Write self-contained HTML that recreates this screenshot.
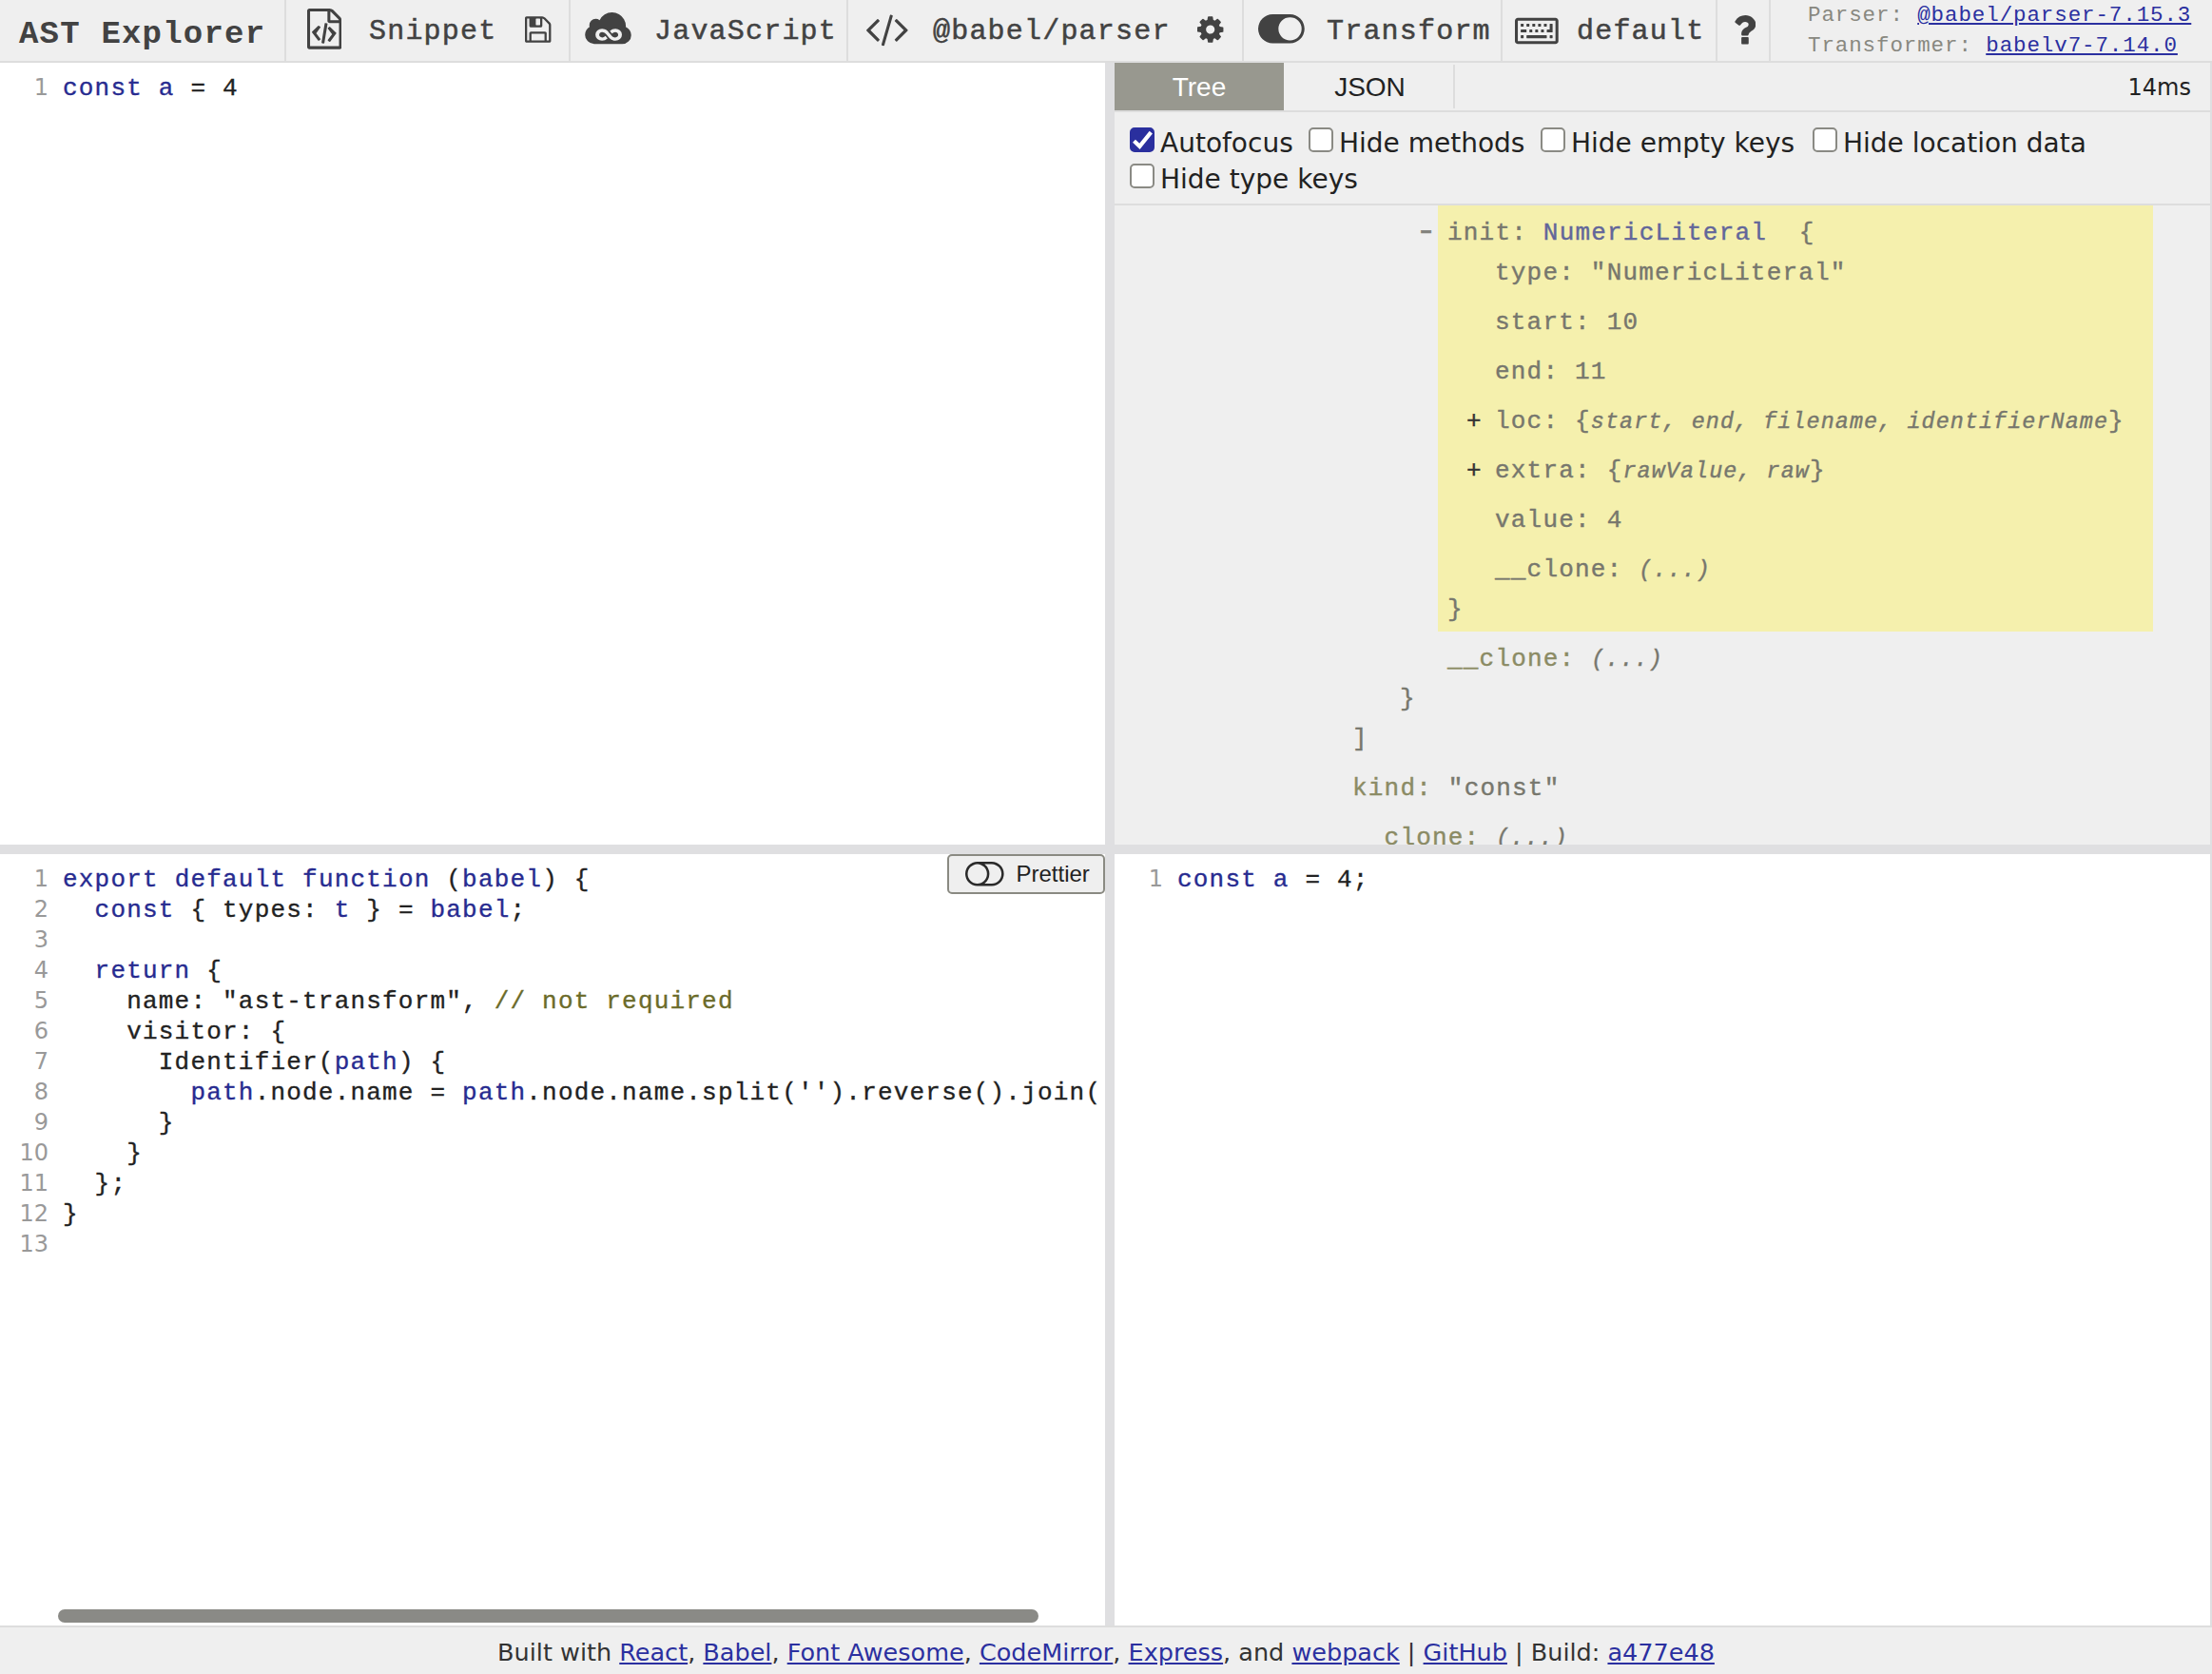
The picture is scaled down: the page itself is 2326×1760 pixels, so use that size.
<!DOCTYPE html>
<html lang="en">
<head>
<meta charset="utf-8">
<title>AST explorer</title>
<style>
html,body{margin:0;padding:0;}
body{width:2326px;height:1760px;overflow:hidden;position:relative;background:#fff;font-family:"DejaVu Sans","Liberation Sans",sans-serif;color:#333;}
*{box-sizing:border-box;}
.mono{font-family:"Liberation Mono",monospace;}
#toolbar{position:absolute;left:0;top:0;width:2326px;height:66px;background:#efefef;border-bottom:2px solid #ddd;font-family:"Liberation Mono",monospace;color:#424242;font-size:30px;letter-spacing:1.2px;line-height:66px;white-space:nowrap;}
#toolbar h1{position:absolute;left:0;top:0;margin:0;padding:0 0 0 20px;font-size:34px;letter-spacing:1.2px;font-weight:bold;line-height:72px;height:64px;}
.sep{position:absolute;top:0;width:2px;height:64px;background:#ddd;}
.tt{position:absolute;top:0;height:64px;line-height:66px;-webkit-text-stroke:0.5px #424242;}
.ic{position:absolute;display:block;fill:#424242;}
#info{position:absolute;left:1901px;top:0;font-size:22.5px;letter-spacing:0.9px;line-height:32px;color:#888880;}
#info a{color:#2b30a0;text-decoration:underline;}
#info div{height:32px;white-space:pre;}

.split{position:absolute;background:#dfdfe1;}
.editor{position:absolute;background:#fff;overflow:hidden;}
.cm{position:absolute;left:0;top:8px;right:0;}
.ln{position:relative;height:32px;line-height:38px;font-family:"Liberation Mono",monospace;font-size:26px;letter-spacing:1.2px;color:#222;white-space:pre;padding-left:66px;-webkit-text-stroke:0.35px;}
.ln i{position:absolute;left:1px;top:2px;width:50px;text-align:right;font-style:normal;font-family:"DejaVu Sans",sans-serif;font-size:24px;letter-spacing:0;color:#999;line-height:32px;-webkit-text-stroke:0;}
.k{color:#272b90;}
.d{color:#272b90;}
.c{color:#6b6b2a;}

#out{position:absolute;left:1172px;top:66px;width:1154px;height:822px;background:#efefef;overflow:hidden;}
#tabs{position:absolute;left:0;top:0;width:1154px;height:52px;border-bottom:2px solid #ddd;font-family:"Liberation Sans",sans-serif;font-size:28px;line-height:52px;color:#222;}
#tabs .tab{position:absolute;top:0;height:50px;text-align:center;}
#tabs .act{background:#98988f;color:#fff;}
#tabs .time{position:absolute;right:22px;top:0;font-size:24px;font-family:"DejaVu Sans",sans-serif;line-height:52px;}
#settings{position:absolute;left:0;top:52px;width:1154px;height:98px;border-bottom:2px solid #ddd;font-size:28px;color:#222;}
#settings .cb{position:absolute;width:26px;height:26px;border:2px solid #8a8a84;border-radius:5px;background:#fff;}
#settings .cb.on{background:#2a2f9e;border-color:#2a2f9e;}
#settings .lb{position:absolute;white-space:nowrap;line-height:34px;}
#tree{position:absolute;left:0;top:150px;width:1154px;bottom:0;font-family:"Liberation Mono",monospace;font-size:26px;letter-spacing:1.2px;line-height:32px;color:#7a7a72;white-space:pre;-webkit-text-stroke:0.4px;}
#tree .hl{position:absolute;background:#f5f0ad;}
#tree .t{position:absolute;height:32px;}
#tree .key{color:#8b8b64;}
#tree .keyh{color:#77776d;}
#tree .tn{color:#62669a;}
#tree .s{color:#77776d;}
#tree em{font-style:italic;font-size:23.4px;letter-spacing:1.08px;}
#tree .tg{color:#333;}

#prettier{position:absolute;left:996px;top:898px;width:166px;height:42px;border:2px solid #8a8a82;border-radius:5px;background:#efefef;font-family:"Liberation Sans",sans-serif;font-size:24px;color:#222;}
#prettier span{position:absolute;left:70.5px;top:0;line-height:38px;}
#hscroll{position:absolute;left:61px;top:1692px;width:1031px;height:14px;border-radius:7px;background:#8a8a86;}
#footer{position:absolute;left:0;top:1709px;width:2326px;height:51px;background:#efefef;border-top:2px solid #ddd;text-align:center;font-size:25.5px;line-height:30px;padding-top:11px;color:#333;white-space:nowrap;}
#footer a{color:#2b30a0;text-decoration:underline;}
</style>
</head>
<body>
<div id="toolbar">
  <h1>AST Explorer</h1>
  <div class="sep" style="left:299px"></div>
  <div class="tt" style="left:388px">Snippet</div>
  <div class="sep" style="left:598px"></div>
  <div class="tt" style="left:688px">JavaScript</div>
  <div class="sep" style="left:890px"></div>
  <div class="tt" style="left:981px">@babel/parser</div>
  <div class="sep" style="left:1306px"></div>
  <div class="tt" style="left:1395px">Transform</div>
  <div class="sep" style="left:1578px"></div>
  <div class="tt" style="left:1658px">default</div>
  <div class="sep" style="left:1804px"></div>
  <div class="sep" style="left:1860px"></div>
  <svg class="ic" viewBox="0 0 1536 1792" style="left:322.6px;top:9.2px;width:36.57px;height:42.67px"><path d="M1468 380q28 28 48 76t20 88v1152q0 40-28 68t-68 28h-1344q-40 0-68-28t-28-68v-1600q0-40 28-68t68-28h896q40 0 88 20t76 48zm-444-244v376h376q-10-29-22-41l-313-313q-12-12-41-22zm384 1528v-1024h-416q-40 0-68-28t-28-68v-416h-768v1536h1280zm-928-896q8-11 21-12.500t24 6.500l51 38q11 8 12.500 21t-6.500 24l-182 243 182 243q8 11 6.500 24t-12.500 21l-51 38q-11 8-24 6.500t-21-12.500l-262-349q-14-19 0-38zm802 301q14 19 0 38l-262 349q-8 11-21 12.500t-24-6.500l-51-38q-11-8-12.500-21t6.500-24l182-243-182-243q-8-11-6.500-24t12.500-21l51-38q11-8 24-6.500t21 12.500zm-620 461q-13-2-20.500-13t-5.500-24l138-831q2-13 13-20.500t24-5.500l63 10q13 2 20.500 13t5.500 24l-138 831q-2 13-13 20.500t-24 5.500z"/></svg>
  <svg class="ic" viewBox="0 0 1536 1792" style="left:552.3px;top:14.5px;width:27.43px;height:32.00px"><path d="M384 1536h768v-384h-768v384zm896 0h128v-896q0-14-10-38.500t-20-34.500l-281-281q-10-10-34-20t-39-10v416q0 40-28 68t-68 28h-576q-40 0-68-28t-28-68v-416h-128v1280h128v-416q0-40 28-68t68-28h832q40 0 68 28t28 68v416zm-384-928v-320q0-13-9.500-22.500t-22.500-9.500h-192q-13 0-22.500 9.500t-9.500 22.500v320q0 13 9.500 22.500t22.500 9.500h192q13 0 22.500-9.500t9.500-22.500zm640 32v928q0 40-28 68t-68 28h-1344q-40 0-68-28t-28-68v-1344q0-40 28-68t68-28h928q40 0 88 20t76 48l280 280q28 28 48 76t20 88z"/></svg>
  <svg class="ic" viewBox="0 0 2048 1792" style="left:615.4px;top:9.5px;width:48.76px;height:42.67px"><path d="M1800 764q111 46 179.500 145.500t68.500 221.500q0 164-118 280.500t-285 116.500q-4 0-11.500-.5t-10.500-.5h-1209q-170-10-288-125.500t-118-280.500q0-110 55-203t147-147q-12-39-12-82 0-115 82-196t199-81q95 0 172 58 75-154 222.500-248t326.500-94q166 0 306 80.500t221.500 218.500 81.500 301q0 6-.5 18t-.5 18zm-1332 349q0 122 84 193t208 71q137 0 240-99-16-20-47.500-56.500t-43.500-50.500q-67 65-144 65-55 0-93.500-33.500t-38.500-87.500q0-53 38.500-87t91.500-34q44 0 84.500 21t73 55 65 75 69 82 77 75 97 55 121.500 21q121 0 204.500-71.500t83.500-190.500q0-121-84-192t-207-71q-143 0-241 97 14 16 29.500 34t34.500 40 29 34q66-64 142-64 52 0 92 33t40 84q0 57-37 91.500t-94 34.500q-43 0-82.500-21t-72-55-65.500-75-69.500-82-77.500-75-96.500-55-118.500-21q-122 0-207 70.500t-85 187.500z"/></svg>
  <svg class="ic" viewBox="0 0 1920 1792" style="left:909.9px;top:9.2px;width:45.71px;height:42.67px"><path d="M617 1399l-50 50q-10 10-23 10t-23-10l-466-466q-10-10-10-23t10-23l466-466q10-10 23-10t23 10l50 50q10 10 10 23t-10 23l-393 393 393 393q10 10 10 23t-10 23zm591-1067l-373 1291q-4 13-15.500 19.500t-23.500 2.500l-62-17q-13-4-19.500-15.500t-2.500-24.500l373-1291q4-13 15.500-19.500t23.500-2.500l62 17q13 4 19.500 15.500t2.500 24.500zm657 651l-466 466q-10 10-23 10t-23-10l-50-50q-10-10-10-23t10-23l393-393-393-393q-10-10-10-23t10-23l50-50q10-10 23-10t23 10l466 466q10 10 10 23t-10 23z"/></svg>
  <svg class="ic" viewBox="0 0 1536 1792" style="left:1259.2px;top:14.5px;width:27.43px;height:32.00px"><path d="M1024 896q0-106-75-181t-181-75-181 75-75 181 75 181 181 75 181-75 75-181zm512-109v222q0 12-8 23t-20 13l-185 28q-19 54-39 91 35 50 107 138 10 12 10 25t-9 23q-27 37-99 108t-94 71q-12 0-26-9l-138-108q-44 23-91 38-16 136-29 186-7 28-36 28h-222q-14 0-24.500-8.500t-11.500-21.500l-28-184q-49-16-90-37l-141 107q-10 9-25 9-14 0-25-11-126-114-165-168-7-10-7-23 0-12 8-23 15-21 51-66.500t54-70.500q-27-50-41-99l-183-27q-13-2-21-12.500t-8-23.500v-222q0-12 8-23t19-13l186-28q14-46 39-92-40-57-107-138-10-12-10-24 0-10 9-23 26-36 98.500-107.500t94.500-71.500q13 0 26 10l138 107q44-23 91-38 16-136 29-186 7-28 36-28h222q14 0 24.500 8.500t11.500 21.500l28 184q49 16 90 37l142-107q9-9 24-9 13 0 25 10 129 119 165 170 7 8 7 22 0 12-8 23-15 21-51 66.500t-54 70.500q26 50 41 98l183 28q13 2 21 12.500t8 23.500z"/></svg>
  <svg class="ic" viewBox="0 0 2048 1792" style="left:1323.0px;top:9.2px;width:48.76px;height:42.67px"><path d="M0 896q0-130 51-248.500t136.500-204 204-136.500 248.500-51h768q130 0 248.500 51t204 136.500 136.500 204 51 248.500-51 248.500-136.500 204-204 136.500-248.500 51h-768q-130 0-248.500-51t-204-136.500-136.500-204-51-248.500zm1408 512q104 0 198.500-40.500t163.500-109.500 109.500-163.500 40.500-198.500-40.500-198.500-109.500-163.500-163.500-109.500-198.500-40.500-198.500 40.500-163.500 109.500-109.500 163.500-40.500 198.500 40.500 198.500 109.500 163.500 163.500 109.500 198.500 40.500z"/></svg>
  <svg class="ic" viewBox="0 0 1920 1792" style="left:1592.9px;top:10.5px;width:45.71px;height:42.67px"><path d="M384 1112v96q0 16-16 16h-96q-16 0-16-16v-96q0-16 16-16h96q16 0 16 16zm128-256v96q0 16-16 16h-224q-16 0-16-16v-96q0-16 16-16h224q16 0 16 16zm-128-256v96q0 16-16 16h-96q-16 0-16-16v-96q0-16 16-16h96q16 0 16 16zm1024 512v96q0 16-16 16h-864q-16 0-16-16v-96q0-16 16-16h864q16 0 16 16zm-640-256v96q0 16-16 16h-96q-16 0-16-16v-96q0-16 16-16h96q16 0 16 16zm-128-256v96q0 16-16 16h-96q-16 0-16-16v-96q0-16 16-16h96q16 0 16 16zm384 256v96q0 16-16 16h-96q-16 0-16-16v-96q0-16 16-16h96q16 0 16 16zm-128-256v96q0 16-16 16h-96q-16 0-16-16v-96q0-16 16-16h96q16 0 16 16zm384 256v96q0 16-16 16h-96q-16 0-16-16v-96q0-16 16-16h96q16 0 16 16zm384 256v96q0 16-16 16h-96q-16 0-16-16v-96q0-16 16-16h96q16 0 16 16zm-512-512v96q0 16-16 16h-96q-16 0-16-16v-96q0-16 16-16h96q16 0 16 16zm256 0v96q0 16-16 16h-96q-16 0-16-16v-96q0-16 16-16h96q16 0 16 16zm256 0v352q0 16-16 16h-224q-16 0-16-16v-96q0-16 16-16h112v-240q0-16 16-16h96q16 0 16 16zm128 752v-896h-1664v896h1664zm128-896v896q0 53-37.500 90.500t-90.500 37.500h-1664q-53 0-90.500-37.500t-37.500-90.500v-896q0-53 37.500-90.500t90.500-37.500h1664q53 0 90.500 37.500t37.500 90.500z"/></svg>
  <svg class="ic" viewBox="0 0 1024 1792" style="left:1821.5px;top:9.7px;width:24.38px;height:42.67px"><path d="M704 1256v240q0 16-12 28t-28 12h-240q-16 0-28-12t-12-28v-240q0-16 12-28t28-12h240q16 0 28 12t12 28zm316-600q0 54-15.500 101t-35 76.500-55 59.500-57.500 43.500-61 35.500q-41 23-68.500 65t-27.500 67q0 17-12 32.500t-28 15.500h-240q-15 0-25.500-18.500t-10.500-37.500v-45q0-83 65-156.500t143-108.500q59-27 84-56t25-76q0-42-46.500-74t-107.500-32q-65 0-108 29-35 25-107 115-13 16-31 16-12 0-25-8l-164-125q-13-10-15.500-25t5.500-28q160-266 464-266 80 0 161 31t146 83 106 127.500 41 158.500z"/></svg>
  <div id="info"><div>Parser: <a>@babel/parser-7.15.3</a></div><div>Transformer: <a>babelv7-7.14.0</a></div></div>
</div>

<div class="editor" id="ed1" style="left:0;top:66px;width:1162px;height:822px;">
  <div class="cm">
    <div class="ln"><i>1</i><span class="k">const</span> <span class="d">a</span> = 4</div>
  </div>
</div>

<div id="out">
  <div id="tabs">
    <div class="tab act" style="left:0;width:178px;">Tree</div>
    <div class="tab" style="left:178px;width:178px;padding-left:3px;">JSON</div>
    <div class="sep" style="left:356px;top:2px;height:46px;background:#ddd"></div>
    <div class="time">14ms</div>
  </div>
  <div id="settings">
    <div class="cb on" style="left:16px;top:16px"><svg viewBox="0 0 26 26" style="position:absolute;left:-2px;top:-2px;width:26px;height:26px"><path d="M4.5 14.2 L10.4 19.8 L22.3 5.2" fill="none" stroke="#fff" stroke-width="4.2" stroke-linejoin="miter"/></svg></div><div class="lb" style="left:48px;top:16px">Autofocus</div>
    <div class="cb" style="left:204px;top:16px"></div><div class="lb" style="left:236px;top:16px">Hide methods</div>
    <div class="cb" style="left:448px;top:16px"></div><div class="lb" style="left:480px;top:16px">Hide empty keys</div>
    <div class="cb" style="left:734px;top:16px"></div><div class="lb" style="left:766px;top:16px">Hide location data</div>
    <div class="cb" style="left:16px;top:54px"></div><div class="lb" style="left:48px;top:54px">Hide type keys</div>
  </div>
  <div id="tree">
    <div class="hl" style="left:340px;top:0px;width:752px;height:448px"></div>
    <div class="t tg" style="left:320px;top:13px;color:#82827c;transform:scale(1.45,1.3);transform-origin:50% 62%">-</div>
    <div class="t tg" style="left:370px;top:211px">+</div>
    <div class="t tg" style="left:370px;top:263px">+</div>
    <div class="t" style="left:350px;top:13px"><span class="keyh">init:</span> <span class="tn">NumericLiteral</span>  <span class="s">{</span></div>
    <div class="t" style="left:400px;top:55px"><span class="keyh">type:</span> <span class="s">"NumericLiteral"</span></div>
    <div class="t" style="left:400px;top:107px"><span class="keyh">start:</span> <span class="s">10</span></div>
    <div class="t" style="left:400px;top:159px"><span class="keyh">end:</span> <span class="s">11</span></div>
    <div class="t" style="left:400px;top:211px"><span class="keyh">loc:</span> <span class="s">{<em>start, end, filename, identifierName</em>}</span></div>
    <div class="t" style="left:400px;top:263px"><span class="keyh">extra:</span> <span class="s">{<em>rawValue, raw</em>}</span></div>
    <div class="t" style="left:400px;top:315px"><span class="keyh">value:</span> <span class="s">4</span></div>
    <div class="t" style="left:400px;top:367px"><span class="keyh">__clone:</span> <span class="s"><em>(...)</em></span></div>
    <div class="t" style="left:350px;top:409px"><span class="s">}</span></div>
    <div class="t" style="left:350px;top:461px"><span class="key">__clone:</span> <span class="s"><em>(...)</em></span></div>
    <div class="t" style="left:300px;top:503px"><span class="s">}</span></div>
    <div class="t" style="left:250px;top:545px"><span class="s">]</span></div>
    <div class="t" style="left:250px;top:597px"><span class="key">kind:</span> <span class="s">"const"</span></div>
    <div class="t" style="left:250px;top:649px"><span class="key">__clone:</span> <span class="s"><em>(...)</em></span></div>
  </div>
</div>

<div class="split" style="left:1162px;top:66px;width:10px;height:1643px;"></div>
<div class="split" style="left:0;top:888px;width:2326px;height:10px;"></div>

<div class="editor" id="ed2" style="left:0;top:898px;width:1162px;height:811px;">
  <div class="cm">
    <div class="ln"><i>1</i><span class="k">export</span> <span class="k">default</span> <span class="k">function</span> (<span class="d">babel</span>) {</div>
    <div class="ln"><i>2</i>  <span class="k">const</span> { types: <span class="d">t</span> } = <span class="d">babel</span>;</div>
    <div class="ln"><i>3</i></div>
    <div class="ln"><i>4</i>  <span class="k">return</span> {</div>
    <div class="ln"><i>5</i>    name: "ast-transform", <span class="c">// not required</span></div>
    <div class="ln"><i>6</i>    visitor: {</div>
    <div class="ln"><i>7</i>      Identifier(<span class="d">path</span>) {</div>
    <div class="ln"><i>8</i>        <span class="d">path</span>.node.name = <span class="d">path</span>.node.name.split('').reverse().join('');</div>
    <div class="ln"><i>9</i>      }</div>
    <div class="ln"><i>10</i>    }</div>
    <div class="ln"><i>11</i>  };</div>
    <div class="ln"><i>12</i>}</div>
    <div class="ln"><i>13</i></div>
  </div>
</div>
<div class="editor" id="ed3" style="left:1172px;top:898px;width:1154px;height:811px;">
  <div class="cm">
    <div class="ln" style="padding-left:66px"><i>1</i><span class="k">const</span> <span class="d">a</span> = 4;</div>
  </div>
</div>
<div id="prettier"><svg class="ic" viewBox="0 0 2048 1792" style="left:17.4px;top:1.2px;width:40.64px;height:35.56px;fill:#2a2a2a"><path d="M1152 896q0-104-40.500-198.500t-109.500-163.500-163.500-109.500-198.500-40.500-198.500 40.500-163.500 109.500-109.500 163.500-40.500 198.500 40.500 198.500 109.500 163.500 163.500 109.500 198.500 40.500 198.500-40.500 163.500-109.500 109.500-163.500 40.500-198.500zm768 0q0-104-40.500-198.500t-109.500-163.500-163.500-109.500-198.500-40.500h-386q119 90 188.500 224t69.500 288-69.500 288-188.500 224h386q104 0 198.500-40.500t163.500-109.500 109.500-163.500 40.500-198.500zm128 0q0 130-51 248.500t-136.500 204-204 136.500-248.500 51h-768q-130 0-248.500-51t-204-136.500-136.500-204-51-248.500 51-248.500 136.500-204 204-136.500 248.500-51h768q130 0 248.500 51t204 136.500 136.500 204 51 248.500z"/></svg><span>Prettier</span></div>
<div id="hscroll"></div>
<div class="split" style="left:2324px;top:66px;width:2px;height:1643px;"></div>
<div id="footer">Built with <a>React</a>, <a>Babel</a>, <a>Font Awesome</a>, <a>CodeMirror</a>, <a>Express</a>, and <a>webpack</a> | <a>GitHub</a> | Build: <a>a477e48</a></div>
</body>
</html>
